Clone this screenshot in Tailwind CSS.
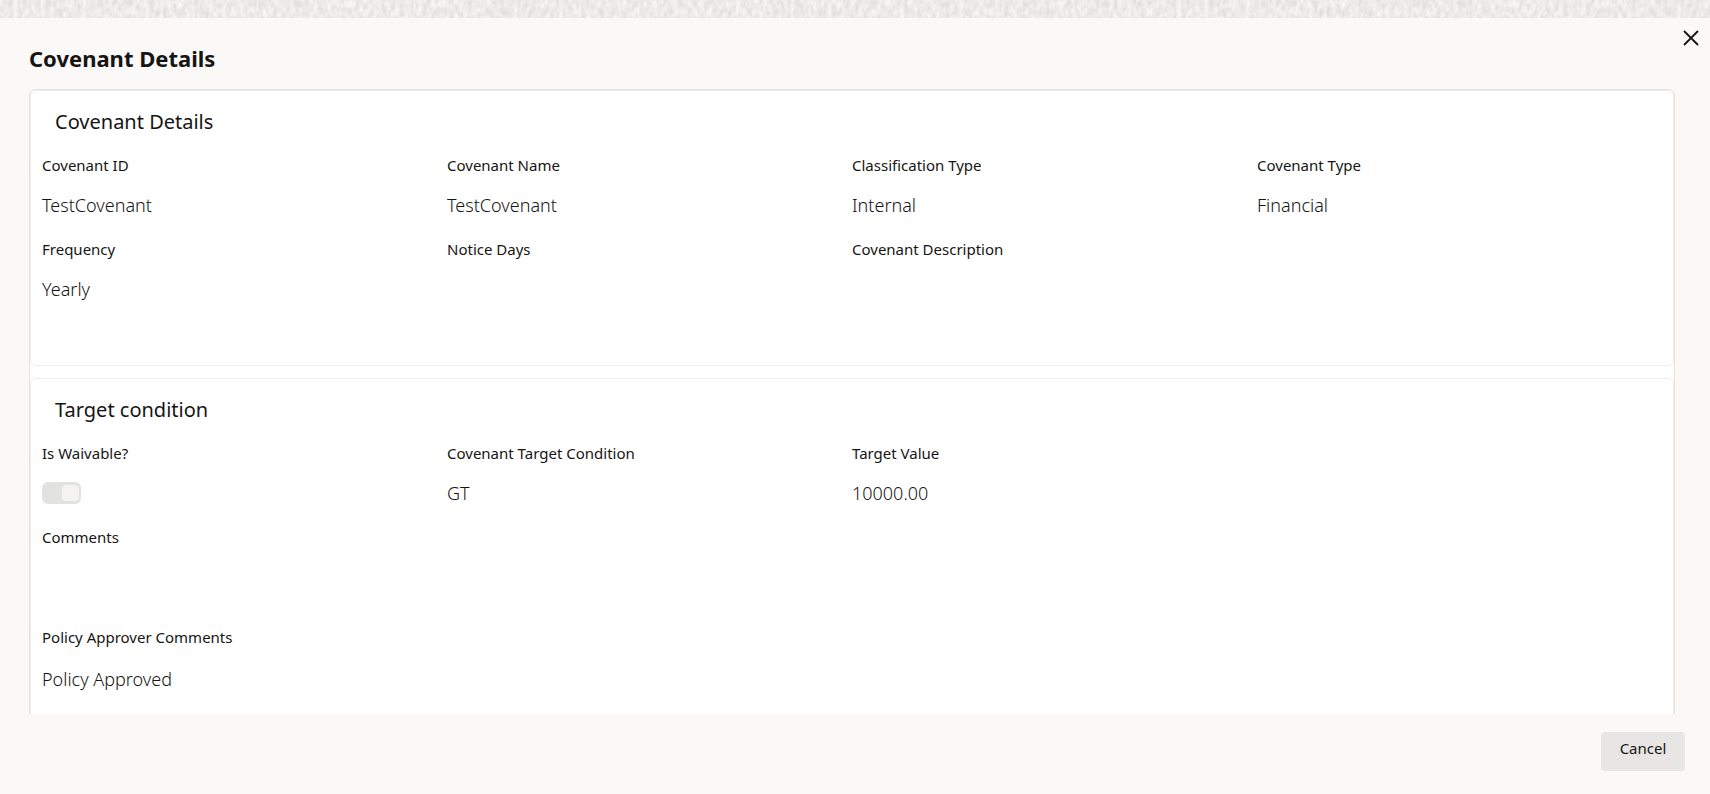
<!DOCTYPE html>
<html lang="en">

<head>
    <meta charset="UTF-8">
    <meta name="viewport" content="width=device-width, initial-scale=1.0">
    <title>Covenant Details</title>
    <script src="https://cdn.jsdelivr.net/npm/@tailwindcss/browser@4"></script>
</head>

<body class="bg-[#fbf9f8] text-[#161513] font-['Noto_Sans','Open_Sans',sans-serif]">
    <div class="flex flex-col h-screen">
        <!-- Textured strip -->
        <svg class="block w-full h-[18px] shrink-0" aria-hidden="true">
            <filter id="texture" x="0" y="0" width="100%" height="100%" color-interpolation-filters="sRGB">
                <feTurbulence type="fractalNoise" baseFrequency="0.22 0.12" numOctaves="2" seed="4" />
                <feColorMatrix values="0.16 0 0 0 0.845  0.16 0 0 0 0.842  0.16 0 0 0 0.836  0 0 0 0 1" />
            </filter>
            <rect width="100%" height="100%" filter="url(#texture)" />
        </svg>

        <!-- Dialog -->
        <div role="dialog" aria-labelledby="dialogTitle" class="flex flex-col flex-1 min-h-0">
            <header class="flex justify-between items-start pl-[29px] pr-[7px] pt-2 pb-2">
                <h1 id="dialogTitle" class="pt-4 text-[22px] leading-8 font-bold">Covenant Details</h1>
                <button type="button" id="closeDialog" aria-label="Close" class="p-1">
                    <svg class="size-4" viewBox="0 0 16 16" fill="none" stroke="currentColor" stroke-width="1.8">
                        <path d="M1 1l14 14M15 1L1 15" />
                    </svg>
                </button>
            </header>

            <!-- Scrollable content -->
            <main class="flex-1 min-h-0 overflow-y-auto [scrollbar-width:none] pt-[7px] pl-[29px] pr-[35px]">
                <div class="flex flex-col gap-3 bg-white border border-[#e4e3e1] rounded-md">
                    <section class="border border-[#efeeed] rounded-md px-[11px] pt-[15px] pb-16">
                        <h2 class="pl-[13px] mb-[17px] text-xl leading-8 font-normal">Covenant Details</h2>
                        <dl class="grid grid-cols-4 gap-y-[22px]">
                            <div class="space-y-[18px]">
                                <dt class="text-[15px] leading-5 font-normal">Covenant ID</dt>
                                <dd class="h-6 text-lg leading-6 font-light">TestCovenant</dd>
                            </div>
                            <div class="space-y-[18px]">
                                <dt class="text-[15px] leading-5 font-normal">Covenant Name</dt>
                                <dd class="h-6 text-lg leading-6 font-light">TestCovenant</dd>
                            </div>
                            <div class="space-y-[18px]">
                                <dt class="text-[15px] leading-5 font-normal">Classification Type</dt>
                                <dd class="h-6 text-lg leading-6 font-light">Internal</dd>
                            </div>
                            <div class="space-y-[18px]">
                                <dt class="text-[15px] leading-5 font-normal">Covenant Type</dt>
                                <dd class="h-6 text-lg leading-6 font-light">Financial</dd>
                            </div>
                            <div class="space-y-[18px]">
                                <dt class="text-[15px] leading-5 font-normal">Frequency</dt>
                                <dd class="h-6 text-lg leading-6 font-light">Yearly</dd>
                            </div>
                            <div class="space-y-[18px]">
                                <dt class="text-[15px] leading-5 font-normal">Notice Days</dt>
                                <dd class="h-6 text-lg leading-6 font-light"></dd>
                            </div>
                            <div class="space-y-[18px]">
                                <dt class="text-[15px] leading-5 font-normal">Covenant Description</dt>
                                <dd class="h-6 text-lg leading-6 font-light"></dd>
                            </div>
                        </dl>
                    </section>

                    <section class="border border-[#efeeed] rounded-md px-[11px] pt-[15px] pb-16">
                        <h2 class="pl-[13px] mb-[17px] text-xl leading-8 font-normal">Target condition</h2>
                        <dl class="grid grid-cols-4 gap-y-[22px]">
                            <div class="space-y-[18px]">
                                <dt class="text-[15px] leading-5 font-normal"><label for="waivable">Is Waivable?</label></dt>
                                <dd class="flex items-center h-6">
                                    <input type="checkbox" role="switch" id="waivable" checked disabled
                                        class="appearance-none w-[39px] h-[22px] rounded-md bg-[#e2e2e0] before:block before:w-[17px] before:h-4 before:mt-[3px] before:ml-5 before:rounded-sm before:bg-[#f4f3f2]">
                                </dd>
                            </div>
                            <div class="space-y-[18px]">
                                <dt class="text-[15px] leading-5 font-normal">Covenant Target Condition</dt>
                                <dd class="h-6 text-lg leading-6 font-light">GT</dd>
                            </div>
                            <div class="space-y-[18px]">
                                <dt class="text-[15px] leading-5 font-normal">Target Value</dt>
                                <dd class="h-6 text-lg leading-6 font-light">10000.00</dd>
                            </div>
                            <div class="col-span-4 space-y-[18px]">
                                <dt class="text-[15px] leading-5 font-normal">Comments</dt>
                                <dd class="h-10 text-lg leading-7 font-light"></dd>
                            </div>
                            <div class="col-span-4 space-y-[18px]">
                                <dt class="text-[15px] leading-5 font-normal">Policy Approver Comments</dt>
                                <dd class="h-10 text-lg leading-7 font-light">Policy Approved</dd>
                            </div>
                        </dl>
                    </section>
                </div>
            </main>

            <!-- Actions -->
            <footer class="flex justify-end pt-[18px] pb-[23px] pr-[25px]">
                <button type="button" id="cancelButton"
                    class="w-[84px] h-[39px] pb-2 rounded bg-[#e8e6e5] hover:bg-[#dddbda] text-[15px] leading-5">Cancel</button>
            </footer>
        </div>
    </div>

    <script>
        const dialog = document.querySelector('[role="dialog"]');

        ['closeDialog', 'cancelButton'].forEach((id) => {
            document.getElementById(id).addEventListener('click', () => {
                dialog.classList.add('hidden');
            });
        });
    </script>
</body>

</html>
